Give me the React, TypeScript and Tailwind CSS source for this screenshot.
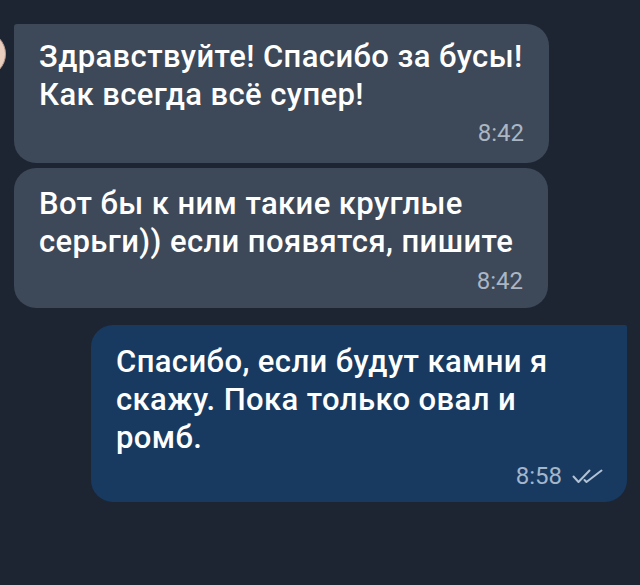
import React from "react";

// Double tick shown next to the time of an outgoing message
function ReadTicks() {
  return (
    <svg width="31" height="15" viewBox="0 0 31 15" fill="none" className="ml-[10px]">
      <path d="M1.5 7.5 L6.5 13 L17.5 1.5" stroke="#b0c2d6" strokeWidth="2" strokeLinecap="round" strokeLinejoin="round" />
      <path d="M12.5 11 L14.5 13 L29.5 1.5" stroke="#b0c2d6" strokeWidth="2" strokeLinecap="round" strokeLinejoin="round" />
    </svg>
  );
}

export default function App() {
  return (
    <div
      className="relative w-[640px] h-[585px] overflow-hidden bg-[#1d2532] text-white"
      style={{ fontFamily: "Roboto, 'Noto Sans', sans-serif" }}
    >
      {/* avatar, mostly cut off by the left edge */}
      <div className="absolute left-[-42px] top-[31px] w-[48px] h-[46px] rounded-full bg-[#e9cdbd] border border-[#b99a8a]" />

      <div className="flex flex-col pt-[24px] pl-[14px]">
        {/* incoming 1 */}
        <div className="w-[535px] h-[139px] rounded-[22px] rounded-tl-[3px] bg-[#3d4858] pl-[25px] pr-[25px] pt-[14px] flex flex-col">
          <p className="text-[31px] leading-[38px] font-medium tracking-[0.4px] whitespace-nowrap">
            Здравствуйте! Спасибо за бусы!
            <br />
            Как всегда всё супер!
          </p>
          <div className="flex justify-end mt-[5px] text-[24px] leading-[28px] text-[#aab6c4]">8:42</div>
        </div>

        {/* incoming 2 */}
        <div className="mt-[5px] w-[534px] h-[140px] rounded-[22px] bg-[#3d4858] pl-[25px] pr-[25px] pt-[17px] flex flex-col">
          <p className="text-[31px] leading-[38px] font-medium tracking-[0.4px] whitespace-nowrap">
            Вот бы к ним такие круглые
            <br />
            серьги)) если появятся, пишите
          </p>
          <div className="flex justify-end mt-[6px] text-[24px] leading-[28px] text-[#aab6c4]">8:42</div>
        </div>

        {/* outgoing */}
        <div className="self-start ml-[77px] mt-[17px] w-[536px] h-[177px] rounded-[22px] rounded-tr-[2px] bg-[#183a60] pl-[25px] pr-[24px] pt-[18px] flex flex-col">
          <p className="text-[31px] leading-[38px] font-medium tracking-[0.4px] whitespace-nowrap">
            Спасибо, если будут камни я
            <br />
            скажу. Пока только овал и
            <br />
            ромб.
          </p>
          <div className="flex justify-end items-center mt-[5px] text-[24px] leading-[28px] text-[#a3b6cb]">
            <span>8:58</span>
            <ReadTicks />
          </div>
        </div>
      </div>
    </div>
  );
}
